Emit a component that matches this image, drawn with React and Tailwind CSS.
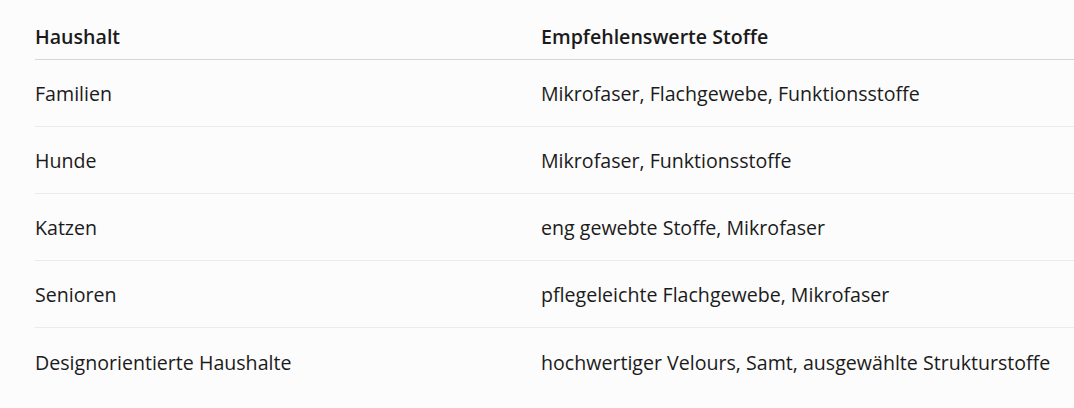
import React from 'react';

const rows = [
    ['Familien', 'Mikrofaser, Flachgewebe, Funktionsstoffe'],
    ['Hunde', 'Mikrofaser, Funktionsstoffe'],
    ['Katzen', 'eng gewebte Stoffe, Mikrofaser'],
    ['Senioren', 'pflegeleichte Flachgewebe, Mikrofaser'],
    ['Designorientierte Haushalte', 'hochwertiger Velours, Samt, ausgewählte Strukturstoffe'],
];

const App = () => {
    return (
        <div className="w-[1074px] h-[408px] overflow-hidden bg-[#fcfcfc] pl-[35px] pt-[15px] text-[#1b1b1b] font-['Open_Sans',sans-serif]">
            <table className="w-full border-collapse text-left text-[19.6px]">
                <thead>
                    <tr className="border-b border-[#d6d6d6]">
                        <th className="w-[506px] h-[44px] p-0 font-semibold align-middle">Haushalt</th>
                        <th className="h-[44px] p-0 font-semibold align-middle">Empfehlenswerte Stoffe</th>
                    </tr>
                </thead>
                <tbody>
                    {rows.map(([a, b], i) => (
                        <tr key={a} className={i < rows.length - 1 ? 'border-b border-[#ebebeb]' : ''}>
                            <td className="h-[67px] p-0 pt-[3px] align-middle">{a}</td>
                            <td className="h-[67px] p-0 pt-[3px] align-middle">{b}</td>
                        </tr>
                    ))}
                </tbody>
            </table>
        </div>
    );
};

export default App;
